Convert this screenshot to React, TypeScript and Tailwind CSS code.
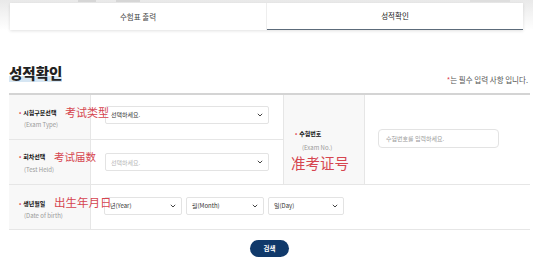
import React from "react";

const kr = { fontFamily: '"Noto Sans CJK KR", "Noto Sans", sans-serif' };
const cn = { fontFamily: '"Noto Sans CJK SC", "Noto Sans", sans-serif' };

function Chevron() {
  return (
    <svg width="6" height="4" viewBox="0 0 6 4" className="shrink-0">
      <path d="M0.8 0.8 L3 3 L5.2 0.8" fill="none" stroke="#444" strokeWidth="1" />
    </svg>
  );
}

function FakeSelect({ text, w, dim }: { text: string; w: string; dim?: boolean }) {
  return (
    <div
      className={`${w} h-[18px] border border-[#e3e3e3] rounded-[2px] bg-white flex items-center justify-between pl-[5px] pr-[5px] text-[6px] ${dim ? "text-[#b5b5b5]" : "text-[#333]"}`}
    >
      <span>{text}</span>
      <Chevron />
    </div>
  );
}

function Label({ title, sub, gap, subPad }: { title: string; sub: string; gap: string; subPad: string }) {
  return (
    <div className="flex flex-col">
      <div className="text-[6px] font-bold text-[#111] leading-[9px]">
        <span className="text-[#e0404a] mr-[2px]">•</span>
        {title}
      </div>
      <div className={`text-[6px] text-[#999] leading-[9px] ${gap} ${subPad}`}>{sub}</div>
    </div>
  );
}

export default function App() {
  return (
    <div className="w-[533px] h-[270px] bg-white relative overflow-hidden" style={kr}>
      {/* top area */}
      <div className="bg-gradient-to-b from-[#e9e9e9] to-white pt-[3px] px-[10px] relative">
        <div className="absolute left-[78px] top-0 w-[18px] h-[2px] bg-[#d6d6d6]" />
        <div className="absolute left-[116px] top-0 w-[24px] h-[2px] bg-[#d6d6d6]" />
        <div className="absolute left-[470px] top-0 w-[40px] h-[2px] bg-[#dedede]" />
        <div className="flex h-[27px] bg-white shadow-[0_1px_3px_rgba(0,0,0,0.12)]">
          <div className="flex-1 flex items-center justify-center text-[7.5px] text-[#444] border-r border-[#eee]">
            수험표 출력
          </div>
          <div className="flex-1 flex items-center justify-center text-[7.5px] text-[#222] border-b-[1.5px] border-[#5c6b7a]">
            성적확인
          </div>
        </div>
      </div>

      {/* heading */}
      <div className="flex items-end justify-between px-[9px] mt-[33px]">
        <h1 className="text-[14.5px] font-extrabold text-[#222] leading-[19px] relative">
          <span className="relative z-10">성적확인</span>
          <span className="absolute left-0 right-0 bottom-[0px] h-[6px] bg-[#d6e6f3]" />
        </h1>
        <div className="text-[7.5px] text-[#555] mb-[-3px] mr-[-4px]">
          <span className="text-[#e0404a]">*</span>는 필수 입력 사항 입니다.
        </div>
      </div>

      {/* table */}
      <div className="mx-[9px] mt-[11px] w-[521px] border-t-2 border-[#d4d4d4] grid grid-cols-[82px_192px_82px_165px] grid-rows-[45px_45px_45px] relative">
        {/* row 1 */}
        <div className="col-start-1 row-start-1 bg-[#f8f8f8] border-r border-b border-[#e6e6e6] flex items-center pl-[10px] pt-[2px]">
          <Label title="시험구분선택" sub="(Exam Type)" gap="mt-[3px]" subPad="pl-[5px]" />
        </div>
        <div className="col-start-2 row-start-1 border-b border-[#e6e6e6] flex items-center pl-[14px] pb-[5px]">
          <FakeSelect text="선택하세요." w="w-[164px]" />
        </div>
        {/* row 2 */}
        <div className="col-start-1 row-start-2 bg-[#f8f8f8] border-r border-b border-[#e6e6e6] flex items-center pl-[10px] pt-[2px]">
          <Label title="회차선택" sub="(Test Held)" gap="mt-[4px]" subPad="pl-[5px]" />
        </div>
        <div className="col-start-2 row-start-2 border-b border-[#e6e6e6] flex items-center pl-[14px]">
          <FakeSelect text="선택하세요." w="w-[164px]" dim />
        </div>
        {/* middle label spanning */}
        <div className="col-start-3 row-start-1 row-span-2 bg-[#f8f8f8] border-l border-r border-b border-[#e6e6e6] flex items-center pl-[11px] pt-[1px]">
          <Label title="수험번호" sub="(Exam No.)" gap="mt-[5px]" subPad="pl-[7px]" />
        </div>
        <div className="col-start-4 row-start-1 row-span-2 border-b border-[#e6e6e6] flex items-center pl-[13px] pb-[3px]">
          <div className="w-[121px] h-[19px] border border-[#e3e3e3] rounded-[4px] flex items-center pl-[7px] text-[6px] text-[#999]">
            수험번호를 입력하세요.
          </div>
        </div>
        {/* row 3 */}
        <div className="col-start-1 row-start-3 bg-[#f8f8f8] border-r border-b border-[#e6e6e6] flex items-center pl-[10px] pt-[5px]">
          <Label title="생년월일" sub="(Date of birth)" gap="mt-[3px]" subPad="pl-[5px]" />
        </div>
        <div className="col-start-2 col-span-3 row-start-3 border-b border-[#e6e6e6] flex items-center pl-[13px] gap-[4px] pb-[3px]">
          <FakeSelect text="년(Year)" w="w-[78px]" />
          <FakeSelect text="월(Month)" w="w-[78px]" />
          <FakeSelect text="일(Day)" w="w-[76px]" />
        </div>

        {/* annotations */}
        <div className="absolute left-[56px] top-[12px] text-[11px] text-[#d6454f] leading-none" style={cn}>考试类型</div>
        <div className="absolute left-[45px] top-[57px] text-[10.5px] text-[#d6454f] leading-none" style={cn}>考试届数</div>
        <div className="absolute left-[282px] top-[61px] text-[14.5px] text-[#d6454f] leading-none" style={cn}>准考证号</div>
        <div className="absolute left-[45px] top-[102px] text-[11.5px] text-[#d6454f] leading-none" style={cn}>出生年月日</div>
      </div>

      {/* button */}
      <div className="flex justify-center mt-[10px] pl-[6px]">
        <div className="w-[39px] h-[17px] rounded-full bg-[#10396a] text-white text-[6.5px] font-bold flex items-center justify-center">
          검색
        </div>
      </div>
    </div>
  );
}
